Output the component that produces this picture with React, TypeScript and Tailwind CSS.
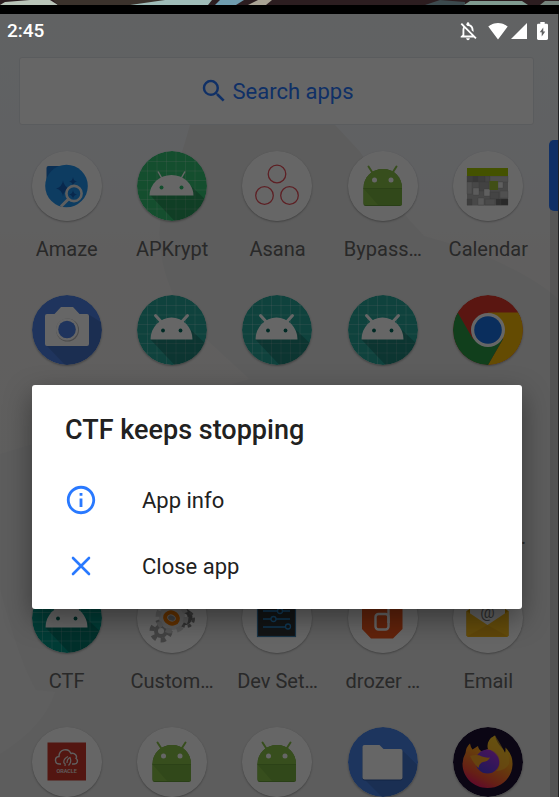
import type { ReactNode } from "react";
import { MdInfoOutline, MdOutlineNotificationsOff, MdSearch } from "react-icons/md";

function Disc({ fill, children }: { fill: string; children?: ReactNode }) {
  return (
    <svg viewBox="0 0 70 70" className="size-[70px] shrink-0 rounded-full shadow-[0_1px_2px_rgba(0,0,0,0.3)]" aria-hidden="true">
      <circle cx="35" cy="35" r="35" fill={fill} />
      {children}
    </svg>
  );
}

const gridLines = [10.5, 20, 29.5, 39, 48.5, 58];

function GridRobot({ color, thin = false }: { color: string; thin?: boolean }) {
  return (
    <Disc fill={color}>
      <path
        d={gridLines
          .map((n) => {
            const h = Math.sqrt(35 * 35 - (n - 35) * (n - 35));
            return `M${n} ${35 - h}V${35 + h}M${35 - h} ${n}H${35 + h}`;
          })
          .join("")}
        stroke="#fff"
        strokeOpacity="0.25"
        strokeWidth="0.8"
      />
      <path d="M13 44L37.500 70A35 35 0 0 0 70 50L54 35Z" fill="#000" fillOpacity="0.2" />
      {thin ? (
        <>
          <path d="M12.500 44.500A22 20.500 0 0 1 56.500 44.500Z" fill="#fff" />
          <path d="M21 20.500L25 27.500M48 20.500L44 27.500" stroke="#fff" strokeWidth="1.500" />
          <circle cx="24.500" cy="36.500" r="2" fill={color} />
          <circle cx="44.500" cy="36.500" r="2" fill={color} />
        </>
      ) : (
        <>
          <path d="M13.500 44.500A21 22 0 0 1 55.500 44.500Z" fill="#fff" />
          <path d="M18.500 20.500L24 26.500M50.500 20.500L45 26.500" stroke="#fff" strokeWidth="3" strokeLinecap="round" />
          <circle cx="26" cy="35.500" r="1.900" fill="#00695c" />
          <circle cx="43.500" cy="35.500" r="1.900" fill="#00695c" />
        </>
      )}
    </Disc>
  );
}

function Droid() {
  return (
    <Disc fill="#fff">
      <path d="M15.500 53V37C15.500 26 24 18 35 18S54 26 54 37V53Q54 55 52 55H17.500Q15.500 55 15.500 53Z" fill="#689f38" />
      <path d="M15.500 52V37C15.500 26 24 18 35 18S54 26 54 37V52Q54 54 52 54H17.500Q15.500 54 15.500 52Z" fill="#8bc34a" />
      <path d="M15.500 37.500H54V52Q54 54 52 54H30Z" fill="#7cb342" />
      <path d="M15.500 37.500H54" stroke="#689f38" strokeWidth="0.800" />
      <path d="M20.500 15.500L25 22.500M48.500 15.500L44 22.500" stroke="#8bc34a" strokeWidth="2" strokeLinecap="round" />
      <circle cx="26.500" cy="29" r="2.500" fill="#fff" />
      <circle cx="43" cy="29" r="2.500" fill="#fff" />
    </Disc>
  );
}

function Amaze() {
  return (
    <Disc fill="#fff">
      <path d="M14.500 17Q14.500 15 16.500 15H34V35H14.500Z" fill="#1976d2" />
      <circle cx="34.500" cy="35" r="21.300" fill="#2196f3" />
      <path d="M31 29.500Q32 36 38 37.500Q32 39 31 45.500Q30 39 24 37.500Q30 36 31 29.500Z" fill="#1565c0" />
      <path d="M41 26Q41.500 30 45 30.500Q41.500 31 41 35Q40.500 31 37 30.500Q40.500 30 41 26Z" fill="#1565c0" />
      <path d="M41 39Q41.500 43 45 43.500Q41.500 44 41 48Q40.500 44 37 43.500Q40.500 43 41 39Z" fill="#1565c0" />
      <circle cx="42" cy="42.500" r="7.600" fill="none" stroke="#eee" strokeWidth="2.600" />
      <path d="M36.500 48L29 55.500" stroke="#eee" strokeWidth="3" />
    </Disc>
  );
}

function Asana() {
  return (
    <Disc fill="#fff">
      <g fill="none" stroke="#e8505b" strokeWidth="1.300">
        <circle cx="35" cy="23" r="8.800" />
        <circle cx="22.500" cy="44.500" r="8.800" />
        <circle cx="47.500" cy="44.500" r="8.800" />
      </g>
    </Disc>
  );
}

const calendarTiles: [number, number, number, number, string][] = [
  [14, 25, 6, 6, "#999"], [20, 25, 5, 6, "#8a8a8a"], [25, 25, 7, 6, "#999"], [32, 25, 5, 6, "#aaa"], [37, 25, 18, 6, "#c4c4c4"],
  [14, 31, 5, 12, "#c8c8c8"], [26, 31, 10, 9, "#a6a6a6"], [20, 37, 6, 7, "#e4e4e4"], [45, 31, 5, 6, "#eee"],
  [31, 38, 6, 7, "#eee"], [37, 41, 9, 7, "#aaa"], [47, 40, 8, 7, "#c8c8c8"], [14, 48, 5, 6, "#999"],
  [25, 47, 6, 7, "#ddd"], [32, 48, 10, 6, "#b8b8b8"], [43, 48, 5, 6, "#777"], [48, 48, 7, 6, "#666"],
];

function Calendar() {
  return (
    <Disc fill="#fff">
      <rect x="14" y="17" width="41" height="37.500" fill="#b4b4b4" />
      {calendarTiles.map(([x, y, w, h, c]) => (
        <rect key={`${x}-${y}`} x={x} y={y} width={w} height={h} fill={c} stroke="#888" strokeWidth="0.300" />
      ))}
      <rect x="14" y="17" width="41" height="8" fill="#aacc00" />
      <rect x="36.500" y="30" width="8.500" height="9" fill="#a4c639" />
    </Disc>
  );
}

function Camera() {
  return (
    <Disc fill="#4f83e8">
      <path d="M14 50L33 70A35 35 0 0 0 69 27L56 19Z" fill="#000" fillOpacity="0.120" />
      <path d="M15 19H22.500L29 12H41L47.500 19H55Q57 19 57 21V49Q57 51 55 51H15Q13 51 13 49V21Q13 19 15 19Z" fill="#fff" />
      <circle cx="35.500" cy="35" r="11.500" fill="#bbb" />
      <circle cx="35" cy="34.500" r="11" fill="#fff" />
      <circle cx="35" cy="34.500" r="8.800" fill="#4f83e8" />
    </Disc>
  );
}

function Chrome() {
  return (
    <Disc fill="#e0392b">
      <path d="M35 17.500H65.300A35 35 0 0 1 35 70L50.200 43.700Z" fill="#fbbc05" />
      <path d="M4.700 17.500L19.800 43.700H50.200L35 70A35 35 0 0 1 4.700 17.500Z" fill="#2b9f48" />
      <circle cx="35" cy="35" r="17" fill="#fff" />
      <circle cx="35" cy="35" r="13.800" fill="#1a73e8" />
    </Disc>
  );
}

function Gears() {
  return (
    <Disc fill="#fff">
      <circle cx="24" cy="48" r="7" fill="#a8a8a8" />
      <circle cx="24" cy="48" r="9" fill="none" stroke="#a8a8a8" strokeWidth="5" strokeDasharray="5 4.400" />
      <circle cx="24" cy="48" r="3" fill="#fff" />
      <circle cx="47" cy="34" r="6" fill="none" stroke="#777" strokeWidth="5" />
      <circle cx="49" cy="36" r="7.500" fill="none" stroke="#888" strokeWidth="3" strokeDasharray="3.500 3" />
      <circle cx="35" cy="34" r="13" fill="#e4e4e4" />
      <circle cx="35" cy="34" r="14" fill="none" stroke="#d4d4d4" strokeWidth="5" strokeDasharray="6 5" />
      <ellipse cx="34.500" cy="35" rx="6.500" ry="5.500" fill="#ddd" stroke="#f57c00" strokeWidth="4" transform="rotate(20 34.500 35)" />
      <ellipse cx="34.500" cy="35" rx="3.500" ry="2.500" fill="#999" transform="rotate(20 34.500 35)" />
    </Disc>
  );
}

function DevSettings() {
  return (
    <Disc fill="#fff">
      <rect x="15.500" y="15.500" width="38" height="38" fill="#2d3236" stroke="#3d7fae" strokeWidth="1.200" />
      <g stroke="#2a8fd8" strokeWidth="1.300" fill="#2d3236">
        <path d="M21 28H48M21 36H48M21 44H48" />
        <circle cx="38" cy="28" r="2.500" />
        <circle cx="31.500" cy="36" r="2.500" />
        <circle cx="46" cy="43.500" r="2.500" />
      </g>
    </Disc>
  );
}

function Drozer() {
  return (
    <Disc fill="#fff">
      <path d="M23 14H45L54.500 23V46L45 55.500H23L14 46V23Z" fill="#f4581c" />
      <rect x="27.500" y="31" width="13" height="15.500" rx="3" fill="none" stroke="#fff" strokeWidth="2.400" />
      <path d="M40.500 24V40" stroke="#fff" strokeWidth="2.400" />
    </Disc>
  );
}

function Email() {
  return (
    <Disc fill="#fff">
      <path d="M13.500 28L34.500 15L55.500 28V53H13.500Z" fill="#d99e00" />
      <path d="M17 18H52V36L34.500 44L17 36Z" fill="#f5f5f5" />
      <text x="34.500" y="35" textAnchor="middle" fontSize="16" fontFamily="Roboto, sans-serif" fill="#777">@</text>
      <path d="M13.500 28L34.500 42L55.500 28V52Q55.500 54 53.500 54H15.500Q13.500 54 13.500 52Z" fill="#f9bd1c" />
      <path d="M14 53.500L34.500 42L55 53.500Z" fill="#eeb017" />
    </Disc>
  );
}

function Oracle() {
  return (
    <Disc fill="#fff">
      <rect x="15.500" y="15.500" width="38.500" height="38" fill="#d0392b" />
      <path d="M29 37H27.500C22.500 37 22 30 27 29.500C27 22.500 36 20 39 26.500C43 25.500 45.500 29 44 31.500C46.500 33 45.500 37 42.500 37H40" fill="none" stroke="#eee" strokeWidth="1.400" />
      <path d="M36 29.500Q31 32 32 36Q33.500 36 33 39M36.500 38.500Q40 35 38 30.500Q35 32 35 36" fill="none" stroke="#eee" strokeWidth="1.200" />
      <text x="34.700" y="45.500" textAnchor="middle" fontSize="5.500" fontWeight="500" fontFamily="Roboto, sans-serif" fill="#eee">ORACLE</text>
    </Disc>
  );
}

function Files() {
  return (
    <Disc fill="#4a86ec">
      <path d="M16 52L34 70A35 35 0 0 0 69.500 38L54 23Z" fill="#000" fillOpacity="0.120" />
      <path d="M16.500 19H31.500L35.500 23H52.500Q54.500 23 54.500 25V51.500Q54.500 53.500 52.500 53.500H16.500Q14.500 53.500 14.500 51.500V21Q14.500 19 16.500 19Z" fill="#2c5aa8" />
      <path d="M16.500 18H31.500L35.500 22H52.500Q54.500 22 54.500 24V50.500Q54.500 52.500 52.500 52.500H16.500Q14.500 52.500 14.500 50.500V20Q14.500 18 16.500 18Z" fill="#fff" />
    </Disc>
  );
}

function Firefox() {
  return (
    <Disc fill="#1c0f33">
      <defs>
        <linearGradient id="fx-flame" x1="0.800" y1="0" x2="0.300" y2="1">
          <stop offset="0" stopColor="#ffe226" />
          <stop offset="0.450" stopColor="#ff9a1f" />
          <stop offset="0.800" stopColor="#ff4f37" />
          <stop offset="1" stopColor="#f0146e" />
        </linearGradient>
        <linearGradient id="fx-globe" x1="0.800" y1="0" x2="0.200" y2="1">
          <stop offset="0" stopColor="#b833e1" />
          <stop offset="1" stopColor="#4d3ee0" />
        </linearGradient>
      </defs>
      <path
        d="M17 16.500Q17.500 20 19.500 22.500L25 19Q25.500 22.500 29 24.500L35 22Q33 13 42 8.500Q43.500 16 49 21Q51 23 52 26Q53 24 52.500 20.500Q60 28 59.500 38C59 51 48 61 34.500 61C20.500 61 9.500 50 9.500 37Q9.500 31 12.500 26Q13 20 17 16.500Z"
        fill="url(#fx-flame)"
      />
      <circle cx="34.500" cy="34.500" r="12" fill="url(#fx-globe)" />
      <path d="M17 29Q24 27 29 29.500Q33 31 37 30.500Q35 34.500 30 35Q26 36.500 25.500 41Q20 36 17 29Z" fill="#ffa726" />
      <path d="M35 22Q41 24 45 30Q49 40 43 44Q52 44 56 37Q57 30 52.500 20.500Q53 24 52 26Q49 19 42 8.500Q33 13 35 22Z" fill="#ffc52e" fillOpacity="0.600" />
    </Disc>
  );
}

type AppEntry = { label: string; icon: ReactNode };

const firstRows: AppEntry[] = [
  { label: "Amaze", icon: <Amaze /> },
  { label: "APKrypt", icon: <GridRobot color="#33c474" thin /> },
  { label: "Asana", icon: <Asana /> },
  { label: "Bypass…", icon: <Droid /> },
  { label: "Calendar", icon: <Calendar /> },
  { label: "", icon: <Camera /> },
  { label: "", icon: <GridRobot color="#26a69a" /> },
  { label: "", icon: <GridRobot color="#26a69a" /> },
  { label: "", icon: <GridRobot color="#26a69a" /> },
  { label: "", icon: <Chrome /> },
];

const lastRows: AppEntry[] = [
  { label: "CTF", icon: <GridRobot color="#009688" /> },
  { label: "Custom…", icon: <Gears /> },
  { label: "Dev Set…", icon: <DevSettings /> },
  { label: "drozer …", icon: <Drozer /> },
  { label: "Email", icon: <Email /> },
  { label: "", icon: <Oracle /> },
  { label: "", icon: <Droid /> },
  { label: "", icon: <Droid /> },
  { label: "", icon: <Files /> },
  { label: "", icon: <Firefox /> },
];

function AppButton({ label, icon }: AppEntry) {
  return (
    <button type="button" className="flex h-36 flex-col items-center gap-4 text-[20px] leading-6 text-[#666]">
      {icon}
      <span className="whitespace-nowrap">{label}</span>
    </button>
  );
}

function Wallpaper() {
  return (
    <svg viewBox="0 0 559 783" preserveAspectRatio="none" className="absolute inset-0 size-full" aria-hidden="true">
      <defs>
        <linearGradient id="sky" x1="0" y1="0" x2="0" y2="1">
          <stop offset="0" stopColor="#f2f5f8" />
          <stop offset="0.200" stopColor="#f0f2f6" />
          <stop offset="0.300" stopColor="#f0eeed" />
          <stop offset="1" stopColor="#ebebeb" />
        </linearGradient>
      </defs>
      <rect width="559" height="783" fill="url(#sky)" />
      <path d="M192 105Q180 150 163 190Q150 250 190 310L250 365L0 440V783H559V285Q535 262 470 235L425 222L410 206Q390 180 360 137L330 105Z" fill="#e8e8e8" />
      <path d="M0 575Q20 650 36 676L55 678Q45 712 0 740Z" fill="#eeeeee" />
    </svg>
  );
}

function PhotoStrip() {
  return (
    <svg viewBox="0 0 559 5" preserveAspectRatio="none" className="h-[5px] w-full shrink-0" aria-hidden="true">
      <rect width="559" height="5" fill="#2c1d20" />
      <path d="M0 5L5 2L30 0H50L58 5Z" fill="#b9c4b8" />
      <path d="M58 5L53 0H170L150 5Z" fill="#3b322c" />
      <path d="M130 5L165 0H212L208 5Z" fill="#9fbcb8" />
      <path d="M215 5L220 0H244L236 5Z" fill="#6f9caf" />
      <path d="M248 5L258 0H272L266 5Z" fill="#a9a394" />
      <path d="M425 5H465V2L440 0Z" fill="#3c4a4e" />
      <path d="M464 5L470 1H522L528 5Z" fill="#7f9a90" />
      <path d="M540 5L545 1H559V5Z" fill="#76857e" />
    </svg>
  );
}

function StatusBar() {
  return (
    <header className="relative z-10 flex h-[34px] items-center justify-between pr-[10px] pl-[7px] text-white">
      <time className="text-[19px] font-medium">2:45</time>
      <div className="flex items-center">
        <MdOutlineNotificationsOff className="mr-[9px] size-[22px]" aria-hidden="true" />
        <svg viewBox="0 3 24 19" preserveAspectRatio="none" className="mr-[3px] h-[17px] w-5" aria-hidden="true">
          <path d="M12 21.500L23.640 7C23.200 6.660 18.700 3 12 3S.810 6.660.360 7L12 21.500Z" fill="currentColor" />
        </svg>
        <svg viewBox="0 0 16 16" className="mr-[10px] size-4" aria-hidden="true">
          <path d="M0 16H16V0Z" fill="currentColor" />
        </svg>
        <svg viewBox="7 2 10 20" preserveAspectRatio="none" className="h-[18px] w-[11px]" aria-hidden="true">
          <path d="M15.670 4H14V2h-4v2H8.330C7.600 4 7 4.600 7 5.330v15.330C7 21.400 7.600 22 8.330 22h7.330c.740 0 1.340-.600 1.340-1.330V5.330C17 4.600 16.400 4 15.670 4zM11.300 18v-4.500H9.500L12.700 8v4.500h1.800L11.300 18z" fill="currentColor" />
        </svg>
      </div>
    </header>
  );
}

function CrashDialog() {
  return (
    <section
      role="alertdialog"
      aria-labelledby="crash-title"
      className="w-full rounded-[3px] bg-white pb-[10px] text-[#212121] shadow-[0_10px_28px_rgba(0,0,0,0.4)]"
    >
      <h1 id="crash-title" className="px-[33px] pt-[29px] pb-[21px] text-[27px] leading-8 font-medium">
        CTF keeps stopping
      </h1>
      <button type="button" className="flex h-[66px] w-full items-center gap-11 px-8 text-[22px]">
        <MdInfoOutline className="size-[34px] text-[#2979ff]" aria-hidden="true" />
        App info
      </button>
      <button type="button" className="flex h-[66px] w-full items-center gap-11 px-8 text-[22px]">
        <svg viewBox="0 0 34 34" className="size-[34px] text-[#2979ff]" aria-hidden="true">
          <path d="M9 9L25 25M25 9L9 25" stroke="currentColor" strokeWidth="2.600" strokeLinecap="round" />
        </svg>
        Close app
      </button>
    </section>
  );
}

export default function App() {
  return (
    <div className="flex h-screen flex-col overflow-hidden bg-black font-[Roboto,sans-serif]">
      <PhotoStrip />
      <main className="relative mt-[9px] min-h-0 flex-1 overflow-hidden border-r border-[#222]">
        <Wallpaper />
        <StatusBar />
        <div className="relative mt-[9px] pr-6 pl-[19px]">
          <label className="flex h-[68px] items-center justify-center gap-1 rounded-[3px] border border-[#e2e5ea] bg-white text-[#2979ff]">
            <MdSearch className="size-[30px]" aria-hidden="true" />
            <input
              type="text"
              placeholder="Search apps"
              aria-label="Search apps"
              className="w-[122px] bg-transparent text-[22px] outline-none placeholder:text-[#2979ff] placeholder:opacity-100"
            />
          </label>
        </div>
        <div className="relative mt-[26px] grid grid-cols-5 pr-[17px] pl-[14px]">
          {firstRows.map((app, i) => (
            <AppButton key={i} {...app} />
          ))}
          <div className="col-span-5 flex h-36 items-end justify-end pr-[15px] pb-[34px] text-[20px] leading-6 text-[#666]">…</div>
          {lastRows.map((app, i) => (
            <AppButton key={i} {...app} />
          ))}
        </div>
        <div className="absolute top-[126px] right-0 bottom-0 w-2 bg-black/10" />
        <div className="absolute top-[126px] right-0 h-[71px] w-[9px] rounded-l-[5px] bg-[#2979ff]" />
        <div className="absolute inset-0 bg-black/60 pt-[371px] pr-9 pl-8">
          <CrashDialog />
        </div>
      </main>
    </div>
  );
}
